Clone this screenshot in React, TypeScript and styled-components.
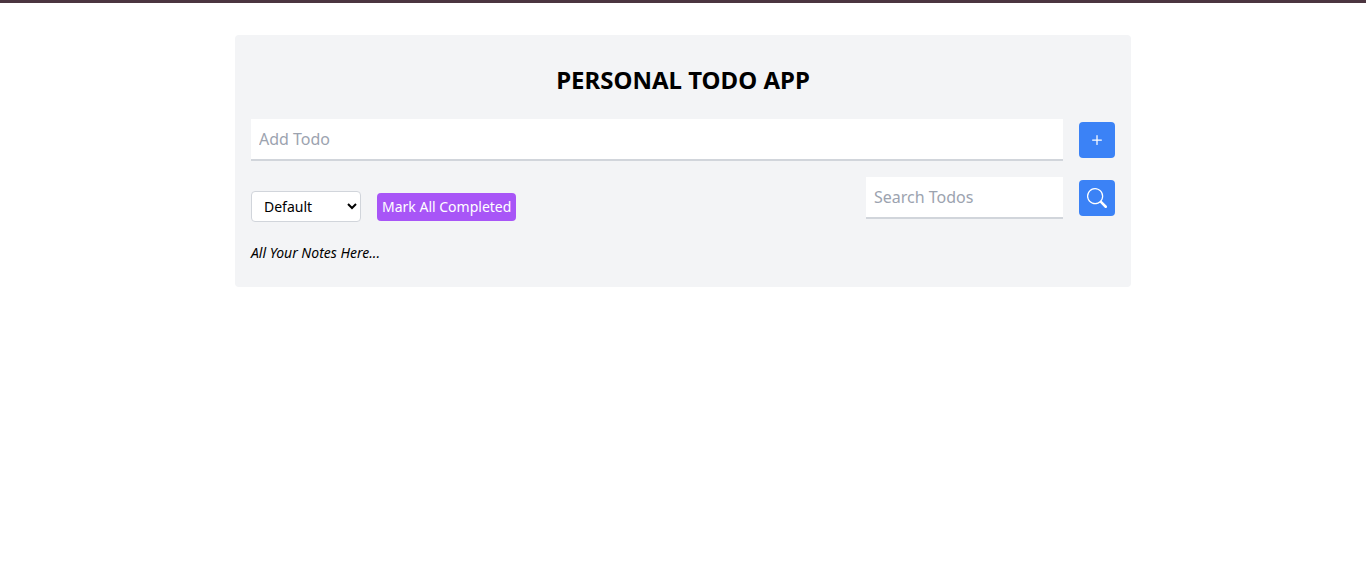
import React from "react";
import styled, { createGlobalStyle } from "styled-components";
import { BsPlus, BsSearch } from "react-icons/bs";

const GlobalStyle = createGlobalStyle`
  *, *::before, *::after { box-sizing: border-box; }
  body {
    margin: 0;
    background: #fff;
    color: #000;
    font-family: "Segoe UI", "Noto Sans", "Open Sans", sans-serif;
    font-size: 16px;
    line-height: 24px;
  }
  button, input, select { font: inherit; margin: 0; }
`;

const TopBar = styled.div`
  height: 3px;
  background: #4b3540;
`;

const Card = styled.main`
  width: calc(100% - 32px);
  max-width: 896px;
  margin: 32px auto 0;
  padding: 16px;
  background: #f3f4f6;
  border-radius: 4px;
`;

const Title = styled.h1`
  margin: 12px 0 20px;
  padding-bottom: 2px;
  font-size: 24px;
  line-height: 34px;
  font-weight: 700;
  text-align: center;
`;

const Row = styled.form`
  display: flex;
  align-items: center;
  gap: 16px;
`;

const TextField = styled.input<{ $grow?: boolean }>`
  flex: ${(p) => (p.$grow ? "1" : "0 1 197px")};
  min-width: 0;
  height: 42px;
  padding: 8px;
  border: 0;
  border-bottom: 2px solid #d1d5db;
  border-radius: 0;
  background: #fff;
  color: #000;
  outline: none;
  &::placeholder { color: #9ca3af; opacity: 1; }
`;

const IconButton = styled.button`
  display: flex;
  flex: none;
  align-items: center;
  justify-content: center;
  width: 36px;
  height: 36px;
  padding: 0;
  border: 0;
  border-radius: 4px;
  background: #3b82f6;
  color: #fff;
  cursor: pointer;
`;

const Toolbar = styled.div`
  display: flex;
  align-items: flex-start;
  justify-content: space-between;
  gap: 16px;
  margin-top: 16px;
`;

const Actions = styled.div`
  display: flex;
  align-items: center;
  gap: 16px;
  padding-top: 14px;
`;

const Filter = styled.select`
  width: 110px;
  height: 31px;
  padding: 4px 0 4px 8px;
  border: 1px solid #d1d5db;
  border-radius: 4px;
  background-color: #fff;
  color: #000;
  font-size: 14px;
  line-height: 20px;
`;

const MarkButton = styled.button`
  padding: 4px 5px;
  border: 0;
  border-radius: 4px;
  background: #a855f7;
  color: #fff;
  font-size: 14px;
  line-height: 20px;
  white-space: nowrap;
  cursor: pointer;
`;

const Notes = styled.p`
  margin: 21px 0 8px;
  font-size: 14px;
  line-height: 20px;
  font-style: italic;
`;

export default function App() {
  return (
    <>
      <GlobalStyle />
      <TopBar />
      <Card>
        <Title>PERSONAL TODO APP</Title>
        <Row onSubmit={(e) => e.preventDefault()}>
          <TextField $grow placeholder="Add Todo" aria-label="Add Todo" />
          <IconButton type="submit" aria-label="Add">
            <BsPlus size={20} />
          </IconButton>
        </Row>
        <Toolbar>
          <Actions>
            <Filter aria-label="Filter todos" defaultValue="Default">
              <option>Default</option>
              <option>Completed</option>
              <option>Pending</option>
            </Filter>
            <MarkButton type="button">Mark All Completed</MarkButton>
          </Actions>
          <Row onSubmit={(e) => e.preventDefault()}>
            <TextField placeholder="Search Todos" aria-label="Search Todos" />
            <IconButton type="submit" aria-label="Search">
              <BsSearch size={20} />
            </IconButton>
          </Row>
        </Toolbar>
        <Notes>All Your Notes Here...</Notes>
      </Card>
    </>
  );
}
